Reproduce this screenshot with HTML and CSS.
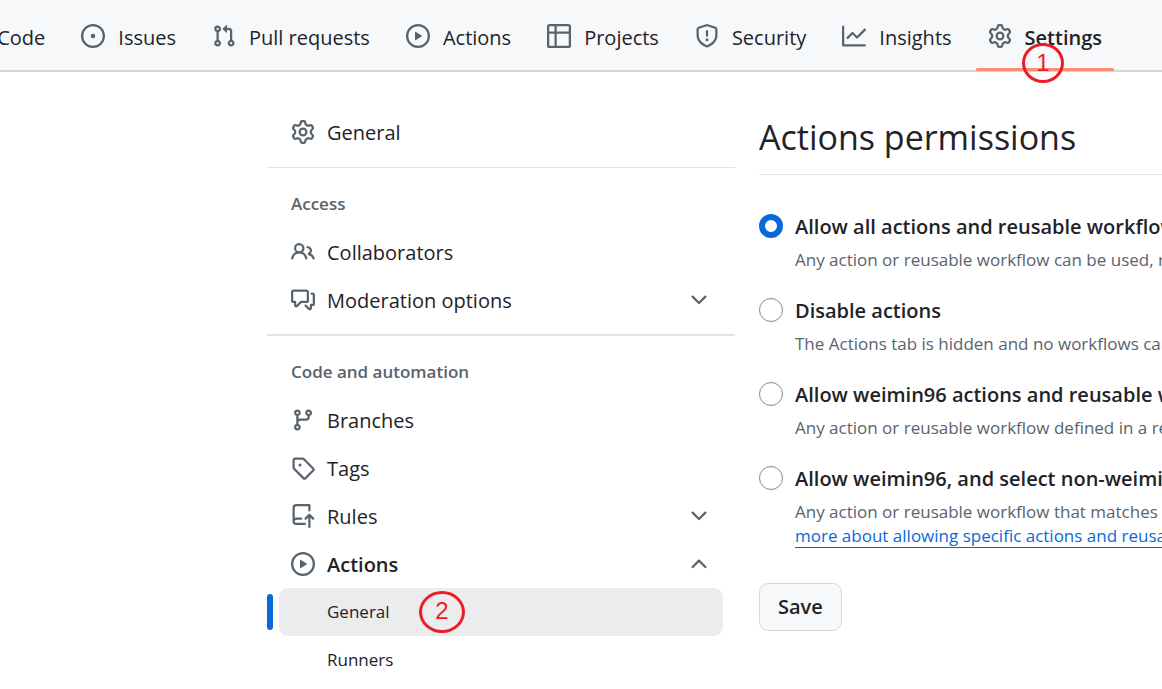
FILE: index.html
```html
<!DOCTYPE html>
<html lang="en">
<head>
<meta charset="utf-8">
<meta name="viewport" content="width=device-width, initial-scale=1">
<title>Actions settings</title>
<link rel="stylesheet" href="styles.css">
</head>
<body>
<svg class="sprite" aria-hidden="true">
  <symbol id="code" viewBox="0 0 16 16"><path d="m11.28 3.22 4.25 4.25a.75.75 0 0 1 0 1.06l-4.25 4.25a.75.75 0 0 1-1.06-1.06L13.94 8l-3.72-3.72a.75.75 0 0 1 1.06-1.06Zm-6.56 0a.75.75 0 0 1 1.06 1.06L2.06 8l3.72 3.72a.75.75 0 0 1-1.06 1.06L.47 8.53a.75.75 0 0 1 0-1.06Z"/></symbol>
  <symbol id="issue" viewBox="0 0 16 16"><path d="M8 9.5a1.5 1.5 0 1 0 0-3 1.5 1.5 0 0 0 0 3Z"/><path d="M8 0a8 8 0 1 1 0 16A8 8 0 0 1 8 0ZM1.5 8a6.5 6.5 0 1 0 13 0 6.5 6.5 0 0 0-13 0Z"/></symbol>
  <symbol id="pull" viewBox="0 0 16 16"><path d="M1.5 3.25a2.25 2.25 0 1 1 3 2.122v5.256a2.251 2.251 0 1 1-1.5 0V5.372A2.25 2.25 0 0 1 1.5 3.25Zm5.677-.177L9.573.677A.25.25 0 0 1 10 .854V2.5h1A2.5 2.5 0 0 1 13.5 5v5.628a2.251 2.251 0 1 1-1.5 0V5a1 1 0 0 0-1-1h-1v1.646a.25.25 0 0 1-.427.177L7.177 3.427a.25.25 0 0 1 0-.354ZM3.75 2.5a.75.75 0 1 0 0 1.5.75.75 0 0 0 0-1.5Zm0 9.5a.75.75 0 1 0 0 1.5.75.75 0 0 0 0-1.5Zm8.25.75a.75.75 0 1 0 1.5 0 .75.75 0 0 0-1.5 0Z"/></symbol>
  <symbol id="play" viewBox="0 0 16 16"><path d="M8 0a8 8 0 1 1 0 16A8 8 0 0 1 8 0ZM1.5 8a6.5 6.5 0 1 0 13 0 6.5 6.5 0 0 0-13 0Zm4.879-2.773 4.264 2.559a.25.25 0 0 1 0 .428l-4.264 2.559A.25.25 0 0 1 6 10.559V5.442a.25.25 0 0 1 .379-.215Z"/></symbol>
  <symbol id="table" viewBox="0 0 16 16"><path d="M0 1.75C0 .784.784 0 1.75 0h12.5C15.216 0 16 .784 16 1.75v12.5A1.75 1.75 0 0 1 14.25 16H1.75A1.75 1.75 0 0 1 0 14.25ZM6.5 6.5v8h7.75a.25.25 0 0 0 .25-.25V6.5Zm8-1.5V1.75a.25.25 0 0 0-.25-.25H6.5V5Zm-13 1.5v7.75c0 .138.112.25.25.25H5v-8ZM5 5V1.5H1.75a.25.25 0 0 0-.25.25V5Z"/></symbol>
  <symbol id="shield" viewBox="0 0 16 16"><path d="M7.467.133a1.748 1.748 0 0 1 1.066 0l5.25 1.68A1.75 1.75 0 0 1 15 3.48V7c0 1.566-.32 3.182-1.303 4.682-.983 1.498-2.585 2.813-5.032 3.855a1.697 1.697 0 0 1-1.33 0c-2.447-1.042-4.049-2.357-5.032-3.855C1.32 10.182 1 8.566 1 7V3.48a1.75 1.75 0 0 1 1.217-1.667Zm.61 1.429a.25.25 0 0 0-.153 0l-5.25 1.68a.25.25 0 0 0-.174.238V7c0 1.358.275 2.666 1.057 3.86.784 1.194 2.121 2.34 4.366 3.297a.196.196 0 0 0 .154 0c2.245-.956 3.582-2.104 4.366-3.298C13.225 9.666 13.5 8.36 13.5 7V3.48a.251.251 0 0 0-.174-.237l-5.25-1.68ZM8.75 4.75v3a.75.75 0 0 1-1.5 0v-3a.75.75 0 0 1 1.5 0ZM9 10.5a1 1 0 1 1-2 0 1 1 0 0 1 2 0Z"/></symbol>
  <symbol id="graph" viewBox="0 0 16 16"><path d="M1.5 1.75V13.5h13.75a.75.75 0 0 1 0 1.5H.75a.75.75 0 0 1-.75-.75V1.75a.75.75 0 0 1 1.5 0Zm14.28 2.53-5.25 5.25a.75.75 0 0 1-1.06 0L7 7.06 4.28 9.78a.751.751 0 0 1-1.042-.018.751.751 0 0 1-.018-1.042l3.25-3.25a.75.75 0 0 1 1.06 0L10 7.94l4.72-4.72a.751.751 0 0 1 1.042.018.751.751 0 0 1 .018 1.042Z"/></symbol>
  <symbol id="gear" viewBox="0 0 16 16"><path d="M8 0a8.2 8.2 0 0 1 .701.031C9.444.095 9.99.645 10.16 1.29l.288 1.107c.018.066.079.158.212.224.231.114.454.243.668.386.123.082.233.09.299.071l1.103-.303c.644-.176 1.392.021 1.82.63.27.385.506.792.704 1.218.315.675.111 1.422-.364 1.891l-.814.806c-.049.048-.098.147-.088.294.016.257.016.515 0 .772-.01.147.038.246.088.294l.814.806c.475.469.679 1.216.364 1.891a7.977 7.977 0 0 1-.704 1.217c-.428.61-1.176.807-1.82.63l-1.102-.302c-.067-.019-.177-.011-.3.071a5.909 5.909 0 0 1-.668.386c-.133.066-.194.158-.211.224l-.29 1.106c-.168.646-.715 1.196-1.458 1.26a8.006 8.006 0 0 1-1.402 0c-.743-.064-1.289-.614-1.458-1.26l-.289-1.106c-.018-.066-.079-.158-.212-.224a5.738 5.738 0 0 1-.668-.386c-.123-.082-.233-.09-.299-.071l-1.103.303c-.644.176-1.392-.021-1.82-.63a8.12 8.12 0 0 1-.704-1.218c-.315-.675-.111-1.422.363-1.891l.815-.806c.05-.048.098-.147.088-.294a6.214 6.214 0 0 1 0-.772c.01-.147-.038-.246-.088-.294l-.815-.806C.635 6.045.431 5.298.746 4.623a7.92 7.92 0 0 1 .704-1.217c.428-.61 1.176-.807 1.82-.63l1.102.302c.067.019.177.011.3-.071.214-.143.437-.272.668-.386.133-.066.194-.158.211-.224l.29-1.106C6.009.645 6.556.095 7.299.03 7.53.01 7.764 0 8 0Zm-.571 1.525c-.036.003-.108.036-.137.146l-.289 1.105c-.147.561-.549.967-.998 1.189-.173.086-.34.183-.5.29-.417.278-.97.423-1.529.27l-1.103-.303c-.109-.03-.175.016-.195.045-.22.312-.412.644-.573.99-.014.031-.021.11.059.19l.815.806c.411.406.562.957.53 1.456a4.709 4.709 0 0 0 0 .582c.032.499-.119 1.05-.53 1.456l-.815.806c-.081.08-.073.159-.059.19.162.346.353.677.573.989.02.03.085.076.195.046l1.102-.303c.56-.153 1.113-.008 1.53.27.161.107.328.204.501.29.447.222.85.629.997 1.189l.289 1.105c.029.109.101.143.137.146a6.6 6.6 0 0 0 1.142 0c.036-.003.108-.036.137-.146l.289-1.105c.147-.561.549-.967.998-1.189.173-.086.34-.183.5-.29.417-.278.97-.423 1.529-.27l1.103.303c.109.029.175-.016.195-.045.22-.313.411-.644.573-.99.014-.031.021-.11-.059-.19l-.815-.806c-.411-.406-.562-.957-.53-1.456a4.709 4.709 0 0 0 0-.582c-.032-.499.119-1.05.53-1.456l.815-.806c.081-.08.073-.159.059-.19a6.464 6.464 0 0 0-.573-.989c-.02-.03-.085-.076-.195-.046l-1.102.303c-.56.153-1.113.008-1.53-.27a4.44 4.44 0 0 0-.501-.29c-.447-.222-.85-.629-.997-1.189l-.289-1.105c-.029-.11-.101-.143-.137-.146a6.6 6.6 0 0 0-1.142 0ZM11 8a3 3 0 1 1-6 0 3 3 0 0 1 6 0ZM9.5 8a1.5 1.5 0 1 0-3.001.001A1.5 1.5 0 0 0 9.5 8Z"/></symbol>
  <symbol id="people" viewBox="0 0 16 16"><path d="M2 5.5a3.5 3.5 0 1 1 5.898 2.549 5.508 5.508 0 0 1 3.034 4.084.75.75 0 1 1-1.482.235 4 4 0 0 0-7.9 0 .75.75 0 0 1-1.482-.236A5.507 5.507 0 0 1 3.102 8.05 3.493 3.493 0 0 1 2 5.5ZM11 4a3.001 3.001 0 0 1 2.22 5.018 5.01 5.01 0 0 1 2.56 3.012.749.749 0 0 1-.885.954.752.752 0 0 1-.549-.514 3.507 3.507 0 0 0-2.522-2.372.75.75 0 0 1-.574-.73v-.352a.75.75 0 0 1 .416-.672A1.5 1.5 0 0 0 11 5.5.75.75 0 0 1 11 4Zm-5.5-.5a2 2 0 1 0-.001 3.999A2 2 0 0 0 5.5 3.5Z"/></symbol>
  <symbol id="comments" viewBox="0 0 16 16"><path d="M1.75 1h8.5c.966 0 1.75.784 1.75 1.75v5.5A1.75 1.75 0 0 1 10.25 10H7.061l-2.574 2.573A1.458 1.458 0 0 1 2 11.543V10h-.25A1.75 1.75 0 0 1 0 8.25v-5.5C0 1.784.784 1 1.75 1ZM1.5 2.75v5.5c0 .138.112.25.25.25h1a.75.75 0 0 1 .75.75v2.19l2.72-2.72a.749.749 0 0 1 .53-.22h3.5a.25.25 0 0 0 .25-.25v-5.5a.25.25 0 0 0-.25-.25h-8.5a.25.25 0 0 0-.25.25Zm13 2a.25.25 0 0 0-.25-.25h-.5a.75.75 0 0 1 0-1.5h.5c.966 0 1.75.784 1.75 1.75v5.5A1.75 1.75 0 0 1 14.25 12H14v1.543a1.458 1.458 0 0 1-2.487 1.03L9.22 12.28a.749.749 0 0 1 .326-1.275.749.749 0 0 1 .734.215l2.22 2.22v-2.19a.75.75 0 0 1 .75-.75h1a.25.25 0 0 0 .25-.25Z"/></symbol>
  <symbol id="branch" viewBox="0 0 16 16"><path d="M9.5 3.25a2.25 2.25 0 1 1 3 2.122V6A2.5 2.5 0 0 1 10 8.5H6a1 1 0 0 0-1 1v1.128a2.251 2.251 0 1 1-1.5 0V5.372a2.25 2.25 0 1 1 1.5 0v1.836A2.493 2.493 0 0 1 6 7h4a1 1 0 0 0 1-1v-.628A2.25 2.25 0 0 1 9.5 3.25Zm-6 0a.75.75 0 1 0 1.5 0 .75.75 0 0 0-1.5 0Zm8.25-.75a.75.75 0 1 0 0 1.5.75.75 0 0 0 0-1.5ZM4.25 12a.75.75 0 1 0 0 1.5.75.75 0 0 0 0-1.5Z"/></symbol>
  <symbol id="tag" viewBox="0 0 16 16"><path d="M1 7.775V2.75C1 1.784 1.784 1 2.75 1h5.025c.464 0 .91.184 1.238.513l6.25 6.25a1.75 1.75 0 0 1 0 2.474l-5.026 5.026a1.75 1.75 0 0 1-2.474 0l-6.25-6.25A1.752 1.752 0 0 1 1 7.775Zm1.5 0c0 .066.026.13.073.177l6.25 6.25a.25.25 0 0 0 .354 0l5.025-5.025a.25.25 0 0 0 0-.354l-6.25-6.25a.25.25 0 0 0-.177-.073H2.75a.25.25 0 0 0-.25.25ZM6 5a1 1 0 1 1 0 2 1 1 0 0 1 0-2Z"/></symbol>
  <symbol id="push" viewBox="0 0 16 16"><path d="M1 2.5A2.5 2.5 0 0 1 3.5 0h8.75a.75.75 0 0 1 .75.75v3.5a.75.75 0 0 1-1.5 0V1.5h-8a1 1 0 0 0-1 1v6.708A2.493 2.493 0 0 1 3.5 9h3.25a.75.75 0 0 1 0 1.5H3.5a1 1 0 0 0 0 2h5.75a.75.75 0 0 1 0 1.5H3.5A2.5 2.5 0 0 1 1 11.5Zm13.23 7.79h-.001l-1.224-1.224v6.184a.75.75 0 0 1-1.5 0V9.066L10.28 10.29a.75.75 0 0 1-1.06-1.061l2.505-2.504a.75.75 0 0 1 1.06 0L15.29 9.23a.751.751 0 0 1-.018 1.042.751.751 0 0 1-1.042.018Z"/></symbol>
  <symbol id="down" viewBox="0 0 16 16"><path d="M12.78 5.22a.749.749 0 0 1 0 1.06l-4.25 4.25a.749.749 0 0 1-1.06 0L3.22 6.28a.749.749 0 1 1 1.06-1.06L8 8.939l3.72-3.719a.749.749 0 0 1 1.06 0Z"/></symbol>
  <symbol id="up" viewBox="0 0 16 16"><path d="M3.22 10.53a.749.749 0 0 1 0-1.06l4.25-4.25a.749.749 0 0 1 1.06 0l4.25 4.25a.749.749 0 1 1-1.06 1.06L8 6.811 4.28 10.53a.749.749 0 0 1-1.06 0Z"/></symbol>
</svg>

<header class="topbar">
  <nav class="tabs" aria-label="Repository">
    <a class="tab" href="#"><svg class="icon"><use href="#code"/></svg><span class="text">Code</span></a>
    <a class="tab" href="#"><svg class="icon"><use href="#issue"/></svg><span class="text">Issues</span></a>
    <a class="tab" href="#"><svg class="icon"><use href="#pull"/></svg><span class="text">Pull requests</span></a>
    <a class="tab" href="#"><svg class="icon"><use href="#play"/></svg><span class="text">Actions</span></a>
    <a class="tab" href="#"><svg class="icon"><use href="#table"/></svg><span class="text">Projects</span></a>
    <a class="tab" href="#"><svg class="icon"><use href="#shield"/></svg><span class="text">Security</span></a>
    <a class="tab" href="#"><svg class="icon"><use href="#graph"/></svg><span class="text">Insights</span></a>
    <a class="tab tab-current" href="#" aria-current="page"><svg class="icon"><use href="#gear"/></svg><span class="text">Settings</span><span class="marker marker-tab">1</span></a>
  </nav>
</header>

<div class="layout">
  <nav class="sidebar" aria-label="Settings">
    <section class="group">
      <a class="row" href="#"><svg class="icon"><use href="#gear"/></svg><span class="text">General</span></a>
    </section>
    <section class="group">
      <h2 class="group-title">Access</h2>
      <a class="row" href="#"><svg class="icon"><use href="#people"/></svg><span class="text">Collaborators</span></a>
      <button class="row" type="button"><svg class="icon"><use href="#comments"/></svg><span class="text">Moderation options</span><svg class="icon chevron"><use href="#down"/></svg></button>
    </section>
    <section class="group group-strong">
      <h2 class="group-title">Code and automation</h2>
      <a class="row" href="#"><svg class="icon"><use href="#branch"/></svg><span class="text">Branches</span></a>
      <a class="row" href="#"><svg class="icon"><use href="#tag"/></svg><span class="text">Tags</span></a>
      <button class="row" type="button"><svg class="icon"><use href="#push"/></svg><span class="text">Rules</span><svg class="icon chevron"><use href="#down"/></svg></button>
      <button class="row row-open" type="button" aria-expanded="true"><svg class="icon"><use href="#play"/></svg><span class="text">Actions</span><svg class="icon chevron"><use href="#up"/></svg></button>
      <a class="subrow subrow-current" href="#" aria-current="page">General<span class="marker marker-row">2</span></a>
      <a class="subrow" href="#">Runners</a>
    </section>
  </nav>

  <main class="content">
    <h1 class="title">Actions permissions</h1>
    <form class="form">
      <div class="option">
        <input class="radio" type="radio" name="policy" id="all" checked>
        <label class="label" for="all">Allow all actions and reusable workflows</label>
        <p class="note">Any action or reusable workflow can be used, regardless of who authored it or where it is defined.</p>
      </div>
      <div class="option">
        <input class="radio" type="radio" name="policy" id="none">
        <label class="label" for="none">Disable actions</label>
        <p class="note">The Actions tab is hidden and no workflows can run.</p>
      </div>
      <div class="option">
        <input class="radio" type="radio" name="policy" id="local">
        <label class="label" for="local">Allow weimin96 actions and reusable workflows</label>
        <p class="note">Any action or reusable workflow defined in a repository within weimin96 can be used.</p>
      </div>
      <div class="option">
        <input class="radio" type="radio" name="policy" id="select">
        <label class="label" for="select">Allow weimin96, and select non-weimin96, actions and reusable workflows</label>
        <p class="note">Any action or reusable workflow that matches the specified criteria.<br><a class="link" href="#">more about allowing specific actions and reusable workflows to run.</a></p>
      </div>
      <button class="save" type="button">Save</button>
    </form>
  </main>
</div>
</body>
</html>
```
FILE: styles.css
```css
* { box-sizing: border-box; }

body {
  margin: 0;
  overflow-x: hidden;
  background: #fff;
  color: #1f2328;
  font-family: "Open Sans", "Noto Sans", sans-serif;
  font-size: 20px;
  line-height: 24px;
}

a { color: inherit; text-decoration: none; }

button { font: inherit; color: inherit; }

.sprite { display: none; }

.icon {
  flex: none;
  width: 24px;
  height: 24px;
  fill: #59636e;
}

.text { padding-top: 2px; }

/* Repository tabs */
.topbar {
  background: #f6f8fa;
  border-bottom: 2px solid #d1d9e0;
}

.tabs {
  display: flex;
  justify-content: flex-end;
  gap: 12px;
  height: 70px;
  padding-right: 48px;
}

.tab {
  position: relative;
  display: flex;
  flex: none;
  align-items: center;
  gap: 13px;
  padding: 2px 12px 0;
}

.tab .text { padding-top: 3px; }

.tab-current { font-weight: 600; }

.tab-current::after {
  content: "";
  position: absolute;
  right: 0;
  bottom: -1px;
  left: 0;
  height: 3px;
  border-radius: 3px;
  background: #fd8c73;
}

/* Numbered callouts */
.marker {
  position: absolute;
  z-index: 1;
  display: grid;
  place-items: center;
  border: 3px solid #ed1c24;
  border-radius: 50%;
  color: #ed1c24;
  font-family: "Liberation Sans", Arial, sans-serif;
  font-size: 24px;
  font-weight: 400;
  line-height: 24px;
}

.marker-tab {
  right: 50px;
  bottom: -13px;
  width: 42px;
  height: 40px;
}

.marker-row {
  top: 3px;
  left: 140px;
  width: 46px;
  height: 42px;
  padding-bottom: 2px;
}

/* Page */
.layout {
  display: grid;
  grid-template-columns: 468px minmax(0, 1fr);
  gap: 24px;
  padding: 36px 0 0 267px;
}

.group + .group {
  margin-top: 11px;
  padding-top: 12px;
  border-top: 1px solid #dfe4e8;
}

.group + .group-strong {
  margin-top: 10px;
  border-top-width: 2px;
}

.group-title {
  margin: 0;
  padding: 0 24px;
  color: #59636e;
  font-size: 17px;
  font-weight: 600;
  line-height: 48px;
}

.row {
  display: flex;
  align-items: center;
  gap: 12px;
  width: 100%;
  height: 48px;
  padding: 0 24px;
  border: 0;
  background: none;
  text-align: left;
}

.row-open { font-weight: 600; }

.chevron { margin-left: auto; }

.subrow {
  position: relative;
  display: block;
  margin: 0 12px;
  padding-left: 48px;
  border-radius: 9px;
  font-size: 17px;
  line-height: 48px;
}

.subrow-current { background: #ebecee; }

.subrow-current::before {
  content: "";
  position: absolute;
  top: 6px;
  bottom: 6px;
  left: -12px;
  width: 6px;
  border-radius: 3px;
  background: #0969da;
}

.content {
  overflow: hidden;
  white-space: nowrap;
}

.title {
  margin: 0;
  padding: 5px 0 13px;
  border-bottom: 1px solid #dfe4e8;
  font-size: 34px;
  font-weight: 400;
  line-height: 48px;
}

.form { padding-top: 33px; }

.option {
  display: grid;
  grid-template-columns: 24px 1fr;
  column-gap: 12px;
  align-items: center;
  margin-bottom: 20px;
}

.radio {
  appearance: none;
  width: 24px;
  height: 24px;
  margin: 0;
  border: 1px solid #818b98;
  border-radius: 50%;
  background: #fff;
}

.radio:checked { border: 6px solid #0969da; }

.label {
  padding-top: 2px;
  font-weight: 600;
  line-height: 34px;
}

.note {
  grid-column: 2;
  margin: 0;
  padding-top: 4px;
  color: #59636e;
  font-size: 17px;
}

.link {
  border-bottom: 1px solid #0969da;
  color: #0969da;
}

.save {
  height: 48px;
  margin-top: 15px;
  padding: 0 18px;
  border: 1px solid #d1d9e0;
  border-radius: 9px;
  background: #f6f8fa;
  font-weight: 600;
}
```
